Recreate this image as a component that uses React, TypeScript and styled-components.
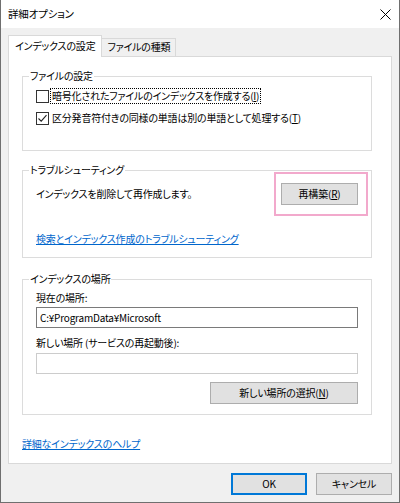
import styled, { createGlobalStyle } from "styled-components";

const GlobalStyle = createGlobalStyle`
  html, body {
    margin: 0;
    padding: 0;
    background: #ffffff;
  }
  body {
    font-family: "Noto Sans CJK JP", "Noto Sans", sans-serif;
    font-size: 10px;
    line-height: 14px;
    letter-spacing: -0.2px;
    color: #000;
    font-feature-settings: "palt";
  }
`;

const Window = styled.div`
  width: 400px;
  height: 503px;
  box-sizing: border-box;
  border: 1px solid #6f6f6f;
  border-top: none;
  display: flex;
  flex-direction: column;
  background: #f0f0f0;
`;

const TitleBar = styled.div`
  height: 28px;
  flex: none;
  background: #fff;
  display: flex;
  align-items: center;
  justify-content: space-between;
  padding: 0 8px 0 7px;
`;

const Title = styled.span`
  font-size: 10.5px;
`;

const Body = styled.div`
  flex: 1;
  padding: 7px 7px 0 7px;
  display: flex;
  flex-direction: column;
`;

const TabRow = styled.div`
  display: flex;
  align-items: flex-end;
  height: 21px;
`;

const Tab = styled.div<{ $active?: boolean }>`
  position: relative;
  box-sizing: border-box;
  border: 1px solid #d9d9d9;
  border-bottom: none;
  background: ${(p) => (p.$active ? "#fff" : "#f0f0f0")};
  height: ${(p) => (p.$active ? "22px" : "18px")};
  margin-bottom: ${(p) => (p.$active ? "-1px" : "0")};
  z-index: ${(p) => (p.$active ? 1 : 0)};
  padding: ${(p) => (p.$active ? "3px 6px 0 6px" : "1px 5px 0 5px")};
  margin-left: ${(p) => (p.$active ? "0" : "-1px")};
`;

const Panel = styled.div`
  height: 408px;
  box-sizing: border-box;
  background: #fff;
  border: 1px solid #d9d9d9;
  padding: 0 19px 0 13px;
  display: flex;
  flex-direction: column;
`;

const Group = styled.fieldset<{ $top: number }>`
  margin: ${(p) => p.$top}px 0 0 0;
  padding: 0 13px;
  border: 1px solid #dcdcdc;
  display: flex;
  flex-direction: column;
  min-width: 0;
`;

const Legend = styled.legend`
  padding: 0 1px;
  margin-left: -7px;
`;

const CheckRow = styled.label<{ $top: number; $bottom?: number }>`
  display: flex;
  align-items: center;
  height: 14px;
  margin-top: ${(p) => p.$top}px;
  margin-bottom: ${(p) => p.$bottom ?? 0}px;
`;

const Box = styled.span`
  width: 11px;
  height: 11px;
  border: 1px solid #333;
  background: #fff;
  display: flex;
  align-items: center;
  justify-content: center;
  margin-right: 1px;
  flex: none;
`;

const CheckLabel = styled.span<{ $focused?: boolean }>`
  padding: 0 1px;
  border: 1px dotted ${(p) => (p.$focused ? "#000" : "transparent")};
  white-space: nowrap;
`;

const ActionRow = styled.div`
  display: flex;
  align-items: center;
  justify-content: space-between;
  margin-top: 6px;
`;

const Highlight = styled.div`
  position: relative;
  &::after {
    content: "";
    position: absolute;
    top: -11px;
    bottom: -11px;
    left: -7px;
    right: -10px;
    border: 2px solid #f2a9cc;
    pointer-events: none;
  }
`;

const Button = styled.button<{ $w: number; $default?: boolean }>`
  width: ${(p) => p.$w}px;
  height: 22px;
  box-sizing: border-box;
  background: #e1e1e1;
  border: ${(p) => (p.$default ? "2px solid #0078d7" : "1px solid #adadad")};
  font: inherit;
  letter-spacing: inherit;
  color: #000;
  padding: 0;
  cursor: default;
`;

const Link = styled.a<{ $top: number; $bottom?: number }>`
  display: block;
  color: #0066cc;
  text-decoration: underline;
  margin-top: ${(p) => p.$top}px;
  margin-bottom: ${(p) => p.$bottom ?? 0}px;
  cursor: pointer;
  white-space: nowrap;
`;

const FieldLabel = styled.div<{ $top: number }>`
  margin-top: ${(p) => p.$top}px;
`;

const TextInput = styled.input<{ $top: number }>`
  margin-top: ${(p) => p.$top}px;
  height: 21px;
  box-sizing: border-box;
  width: 100%;
  border: 1px solid ${(p) => (p.disabled ? "#cccccc" : "#7a7a7a")};
  background: #fff;
  font: inherit;
  letter-spacing: inherit;
  color: #000;
  padding: 0 3px;
  outline: none;
`;

const RightRow = styled.div`
  display: flex;
  justify-content: flex-end;
  margin-top: 8px;
  margin-bottom: 10px;
`;

const Footer = styled.div`
  display: flex;
  justify-content: flex-end;
  gap: 9px;
  margin-top: 9px;
`;

const Close = () => (
  <svg width="11" height="11" viewBox="0 0 11 11">
    <path d="M0.5 0.5 L10.5 10.5 M10.5 0.5 L0.5 10.5" stroke="#000" strokeWidth="1" fill="none" />
  </svg>
);

const Check = () => (
  <svg width="9" height="9" viewBox="0 0 9 9">
    <path d="M0.5 4.5 L3.2 7.2 L8.5 1.2" stroke="#222" strokeWidth="1.1" fill="none" />
  </svg>
);

export default function App() {
  return (
    <>
      <GlobalStyle />
      <Window>
        <TitleBar>
          <Title>詳細オプション</Title>
          <Close />
        </TitleBar>
        <Body>
          <TabRow>
            <Tab $active>インデックスの設定</Tab>
            <Tab>ファイルの種類</Tab>
          </TabRow>
          <Panel>
            <Group $top={12}>
              <Legend>ファイルの設定</Legend>
              <CheckRow $top={6}>
                <Box />
                <CheckLabel $focused>
                  暗号化されたファイルのインデックスを作成する(<u>I</u>)
                </CheckLabel>
              </CheckRow>
              <CheckRow $top={8} $bottom={25}>
                <Box>
                  <Check />
                </Box>
                <CheckLabel>
                  区分発音符付きの同様の単語は別の単語として処理する(<u>T</u>)
                </CheckLabel>
              </CheckRow>
            </Group>
            <Group $top={12}>
              <Legend>トラブルシューティング</Legend>
              <ActionRow>
                <span>インデックスを削除して再作成します。</span>
                <Highlight>
                  <Button $w={77}>
                    再構築(<u>R</u>)
                  </Button>
                </Highlight>
              </ActionRow>
              <Link $top={27} $bottom={11}>
                検索とインデックス作成のトラブルシューティング
              </Link>
            </Group>
            <Group $top={14}>
              <Legend>インデックスの場所</Legend>
              <FieldLabel $top={5}>現在の場所:</FieldLabel>
              <TextInput $top={2} defaultValue="C:¥ProgramData¥Microsoft" readOnly />
              <FieldLabel $top={8}>新しい場所 (サービスの再起動後):</FieldLabel>
              <TextInput $top={3} disabled />
              <RightRow>
                <Button $w={148}>
                  新しい場所の選択(<u>N</u>)
                </Button>
              </RightRow>
            </Group>
            <Link $top={22}>詳細なインデックスのヘルプ</Link>
          </Panel>
          <Footer>
            <Button $w={76} $default>
              OK
            </Button>
            <Button $w={76}>キャンセル</Button>
          </Footer>
        </Body>
      </Window>
    </>
  );
}
